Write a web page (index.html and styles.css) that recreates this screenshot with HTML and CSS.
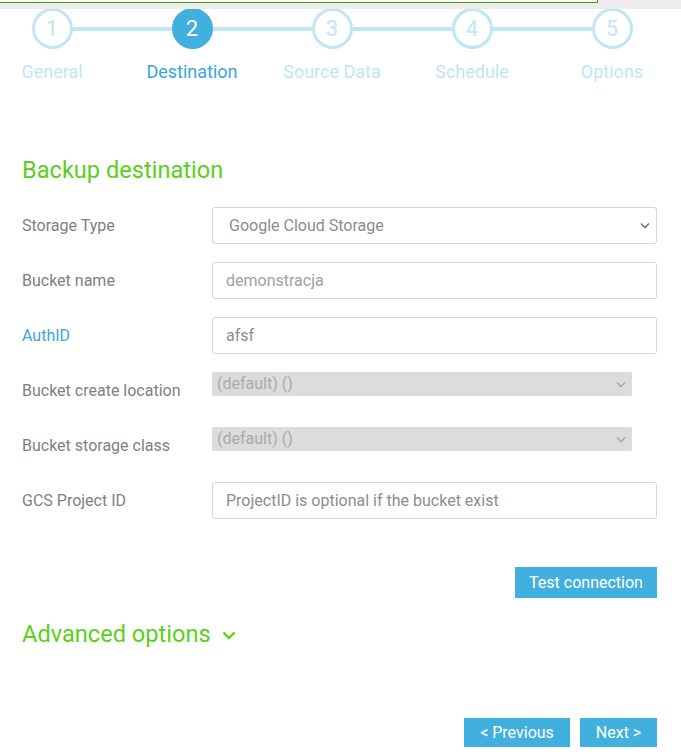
FILE: index.html
```html
<!DOCTYPE html>
<html>
<head>
<meta charset="utf-8">
<link rel="stylesheet" href="styles.css">
</head>
<body>
<div class="topbar"><div class="frame"></div></div>
<div class="stepper">
  <div class="step"><div class="circle">1</div><div class="step-label">General</div></div>
  <div class="step active"><div class="circle">2</div><div class="step-label">Destination</div></div>
  <div class="step"><div class="circle">3</div><div class="step-label">Source Data</div></div>
  <div class="step"><div class="circle">4</div><div class="step-label">Schedule</div></div>
  <div class="step last"><div class="circle">5</div><div class="step-label">Options</div></div>
</div>

<main class="content">
  <h2 class="heading">Backup destination</h2>
  <div class="form">
    <div class="row">
      <label class="label">Storage Type</label>
      <div class="select-wrap">
        <select class="control select"><option>Google Cloud Storage</option></select>
        <svg class="chev" width="10" height="7" viewBox="0 0 10 7"><path d="M1 1.5 L5 5.5 L9 1.5" fill="none" stroke="#777" stroke-width="1.6"/></svg>
      </div>
    </div>
    <div class="row">
      <label class="label">Bucket name</label>
      <input class="control input" value="demonstracja">
    </div>
    <div class="row">
      <label class="label auth">AuthID</label>
      <input class="control input dark" value="afsf">
    </div>
    <div class="row">
      <label class="label">Bucket create location</label>
      <div class="select-wrap small">
        <select class="control disabled" disabled><option>(default) ()</option></select>
        <svg class="chev" width="10" height="7" viewBox="0 0 10 7"><path d="M1 1.5 L5 5.5 L9 1.5" fill="none" stroke="#aaa" stroke-width="1.6"/></svg>
      </div>
    </div>
    <div class="row">
      <label class="label">Bucket storage class</label>
      <div class="select-wrap small">
        <select class="control disabled" disabled><option>(default) ()</option></select>
        <svg class="chev" width="10" height="7" viewBox="0 0 10 7"><path d="M1 1.5 L5 5.5 L9 1.5" fill="none" stroke="#aaa" stroke-width="1.6"/></svg>
      </div>
    </div>
    <div class="row">
      <label class="label">GCS Project ID</label>
      <input class="control input" placeholder="ProjectID is optional if the bucket exist">
    </div>
  </div>

  <div class="test-row"><button class="btn test">Test connection</button></div>

  <div class="advanced">Advanced options
    <svg width="14" height="9" viewBox="0 0 14 9"><path d="M1.5 1.5 L7 7 L12.5 1.5" fill="none" stroke="#5bcf1a" stroke-width="2.4"/></svg>
  </div>

  <div class="nav">
    <button class="btn prev">&lt; Previous</button>
    <button class="btn next">Next &gt;</button>
  </div>
</main>
</body>
</html>
```

FILE: styles.css
```css
html, body {
  margin: 0;
  padding: 0;
  background: #fff;
  font-family: Roboto, "Liberation Sans", sans-serif;
  overflow: hidden;
}
.topbar {
  height: 9px;
  background: #ececec;
  position: relative;
  z-index: 2;
}
.frame {
  width: 597px;
  height: 2px;
  background: #fff;
  border-bottom: 1px solid #3c9c00;
  border-right: 1px solid #3c9c00;
}
.stepper {
  display: grid;
  grid-template-columns: repeat(5, 140px);
  margin-left: -18px;
  margin-top: -1px;
  position: relative;
  z-index: 1;
}
.step {
  display: flex;
  flex-direction: column;
  align-items: center;
  position: relative;
}
.step::after {
  content: "";
  position: absolute;
  left: 70px;
  width: 140px;
  top: 19px;
  height: 4px;
  background: #c0e6f6;
  z-index: 0;
}
.step.last::after { display: none; }
.circle {
  width: 35px;
  height: 35px;
  border: 3px solid #c0e6f6;
  border-radius: 50%;
  background: #fff;
  color: #c0e6f6;
  font-size: 22px;
  display: flex;
  align-items: center;
  justify-content: center;
  position: relative;
  z-index: 1;
}
.step.active .circle {
  background: #42b0de;
  border-color: #42b0de;
  color: #fff;
}
.step-label {
  margin-top: 11px;
  font-size: 18px;
  line-height: 24px;
  color: #c0e6f6;
}
.step.active .step-label { color: #3aa6d9; }

.content {
  padding: 0 24px 0 22px;
}
.heading {
  margin: 72px 0 0 0;
  font-size: 23.6px;
  line-height: 28px;
  font-weight: 400;
  color: #5bcf1a;
}
.form {
  margin-top: 23px;
  display: flex;
  flex-direction: column;
  gap: 18px;
}
.row {
  display: flex;
  align-items: flex-start;
  height: 37px;
}
.label {
  width: 190px;
  flex: none;
  font-size: 16px;
  line-height: 37px;
  color: #808080;
}
.label.auth { color: #3aa6d9; }
.control {
  box-sizing: border-box;
  font-family: Roboto, "Liberation Sans", sans-serif;
  font-size: 16px;
  height: 37px;
  border: 1px solid #d6d6d6;
  border-radius: 3px;
  background: #fff;
  color: #a0a0a0;
  padding: 0 12px 0 13px;
  outline: none;
}
.input { width: 446px; }
.input.dark { color: #8c8c8c; }
.input::placeholder { color: #8c8c8c; opacity: 1; }
.select-wrap {
  position: relative;
  width: 446px;
}
.select-wrap.small { width: 420px; }
.select {
  width: 100%;
  appearance: none;
  -webkit-appearance: none;
  color: #8c8c8c;
  padding-left: 16px;
}
.disabled {
  appearance: none;
  -webkit-appearance: none;
  width: 100%;
  height: 24px;
  border: none;
  border-radius: 2px;
  background: #dcdcdc;
  color: #aaa;
  padding: 0 5px;
  font-size: 16px;
  line-height: 20px;
  opacity: 1;
}
.chev {
  position: absolute;
  right: 7px;
  top: 15px;
  pointer-events: none;
}
.select-wrap.small .chev { top: 9px; right: 6px; }

.test-row {
  display: flex;
  justify-content: flex-end;
  margin-top: 48px;
}
.btn {
  border: none;
  background: #42b0de;
  color: #fff;
  font-family: Roboto, "Liberation Sans", sans-serif;
  font-size: 16px;
  border-radius: 0;
  padding: 0;
  cursor: pointer;
}
.test { width: 142px; height: 31px; }
.advanced {
  margin-top: 20px;
  font-size: 23.6px;
  line-height: 32px;
  color: #5bcf1a;
  display: flex;
  align-items: center;
  gap: 11px;
}
.advanced svg { margin-top: 2px; }
.nav {
  margin-top: 68px;
  display: flex;
  justify-content: flex-end;
  gap: 10px;
}
.prev { width: 106px; height: 29px; }
.next { width: 77px; height: 29px; }
```
